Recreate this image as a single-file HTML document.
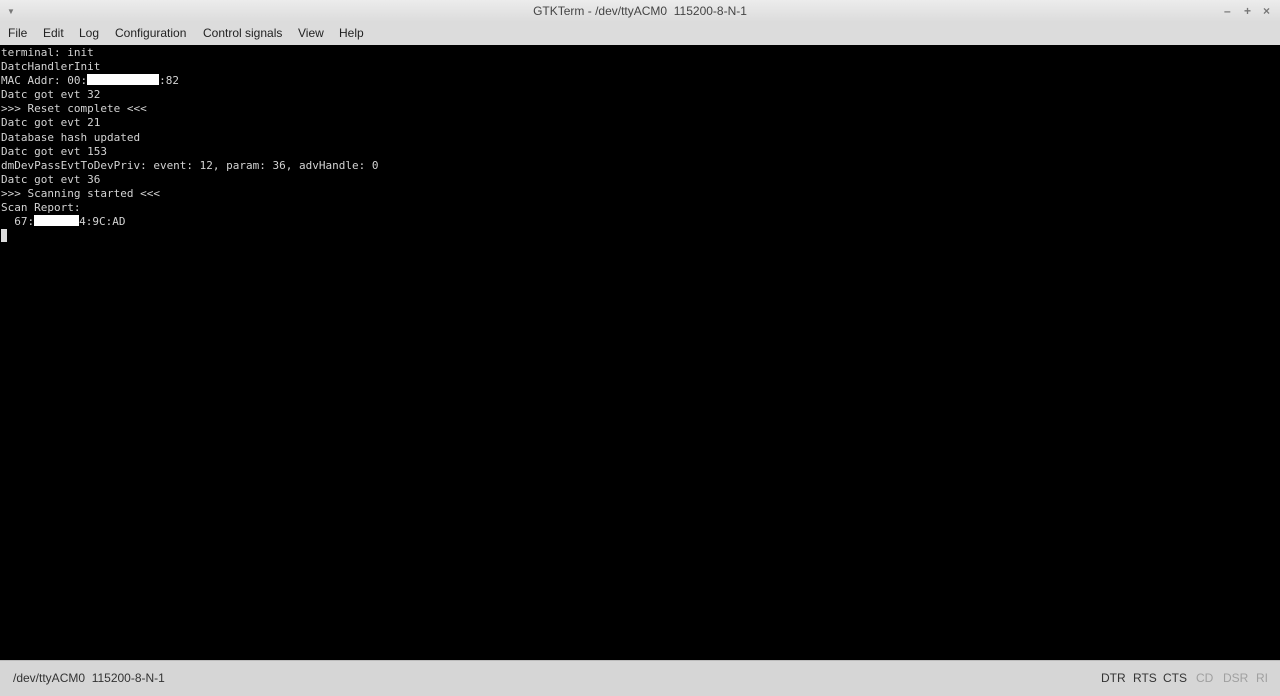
<!DOCTYPE html>
<html><head><style>
body{margin:0;width:1280px;height:695px;overflow:hidden;font-family:"Liberation Sans","DejaVu Sans",sans-serif;background:#000}
#title{position:absolute;top:0;left:0;width:1280px;height:22px;background:linear-gradient(#ececec,#dcdcdc);font-size:12px;color:#444;text-align:center;line-height:23px}
#menu{position:absolute;top:22px;left:0;width:1280px;height:23px;background:#dcdcdc;font-size:12px;color:#222}
#menu span{position:absolute;top:4px}
#term{position:absolute;top:46px;left:1px;font-family:"DejaVu Sans Mono",monospace;font-size:11px;line-height:14.1px;color:#d3d3d3;white-space:pre}
.w{background:#fff;display:inline-block;height:11px;vertical-align:-1px}
#status{position:absolute;top:660px;left:0;width:1280px;height:35px;background:#d6d6d6;border-top:1px solid #bbb;font-size:12px;color:#333}
#status span{position:absolute;top:10px}
.g{color:#a0a0a0}
</style></head><body>
<div id="title">GTKTerm - /dev/ttyACM0&nbsp; 115200-8-N-1
<span style="position:absolute;left:7px;top:0;font-size:8px;color:#777">▼</span>
<span style="position:absolute;left:1224px;top:0;color:#777;font-weight:bold">–</span>
<span style="position:absolute;left:1244px;top:0;color:#777;font-weight:bold">+</span>
<span style="position:absolute;left:1263px;top:0;color:#777;font-weight:bold">×</span></div>
<div id="menu"><span style="left:8px">File</span><span style="left:43px">Edit</span><span style="left:79px">Log</span><span style="left:115px">Configuration</span><span style="left:203px">Control signals</span><span style="left:298px">View</span><span style="left:339px">Help</span></div>
<div id="term">terminal: init
DatcHandlerInit
MAC Addr: 00:<span class="w" style="width:72px"></span>:82
Datc got evt 32
&gt;&gt;&gt; Reset complete &lt;&lt;&lt;
Datc got evt 21
Database hash updated
Datc got evt 153
dmDevPassEvtToDevPriv: event: 12, param: 36, advHandle: 0
Datc got evt 36
&gt;&gt;&gt; Scanning started &lt;&lt;&lt;
Scan Report:
  67:<span class="w" style="width:45px"></span>4:9C:AD
<span style="background:#ddd;display:inline-block;width:6px;height:13px;vertical-align:-2px"></span></div>
<div id="status"><span style="left:13px">/dev/ttyACM0&nbsp; 115200-8-N-1</span>
<span style="left:1101px">DTR</span><span style="left:1133px">RTS</span><span style="left:1163px">CTS</span><span class="g" style="left:1196px">CD</span><span class="g" style="left:1223px">DSR</span><span class="g" style="left:1256px">RI</span></div>
</body></html>
